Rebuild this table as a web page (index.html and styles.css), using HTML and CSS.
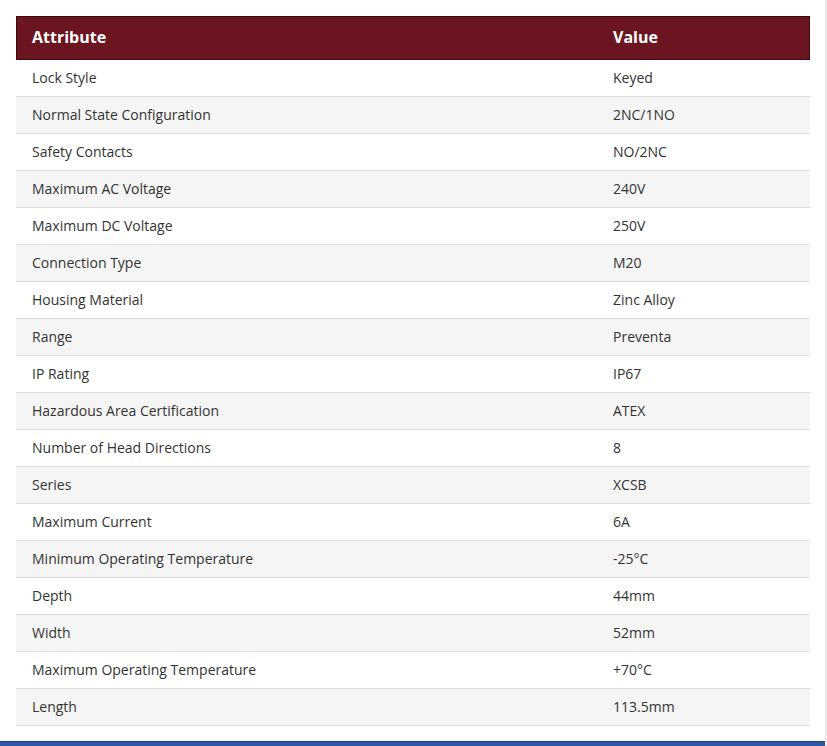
FILE: index.html
```html
<!DOCTYPE html>
<html>
<head>
<meta charset="utf-8">
<link rel="stylesheet" href="styles.css">
</head>
<body>
<div class="page">
  <div class="content">
    <table class="spec">
      <colgroup><col class="c1"><col class="c2"></colgroup>
      <thead>
        <tr><th>Attribute</th><th>Value</th></tr>
      </thead>
      <tbody>
        <tr><td>Lock Style</td><td>Keyed</td></tr>
        <tr><td>Normal State Configuration</td><td>2NC/1NO</td></tr>
        <tr><td>Safety Contacts</td><td>NO/2NC</td></tr>
        <tr><td>Maximum AC Voltage</td><td>240V</td></tr>
        <tr><td>Maximum DC Voltage</td><td>250V</td></tr>
        <tr><td>Connection Type</td><td>M20</td></tr>
        <tr><td>Housing Material</td><td>Zinc Alloy</td></tr>
        <tr><td>Range</td><td>Preventa</td></tr>
        <tr><td>IP Rating</td><td>IP67</td></tr>
        <tr><td>Hazardous Area Certification</td><td>ATEX</td></tr>
        <tr><td>Number of Head Directions</td><td>8</td></tr>
        <tr><td>Series</td><td>XCSB</td></tr>
        <tr><td>Maximum Current</td><td>6A</td></tr>
        <tr><td>Minimum Operating Temperature</td><td>-25°C</td></tr>
        <tr><td>Depth</td><td>44mm</td></tr>
        <tr><td>Width</td><td>52mm</td></tr>
        <tr><td>Maximum Operating Temperature</td><td>+70°C</td></tr>
        <tr><td>Length</td><td>113.5mm</td></tr>
      </tbody>
    </table>
  </div>
  <div class="footer-bar"></div>
</div>
</body>
</html>
```
FILE: styles.css
```css
html, body {
  margin: 0;
  padding: 0;
  background: #ffffff;
}
.page {
  width: 827px;
  height: 746px;
  display: flex;
  flex-direction: column;
  overflow: hidden;
  box-sizing: border-box;
  border-right: 2px solid #ececec;
}
.content {
  flex: 1;
  padding: 16px 15px 0 16px;
}
.spec {
  width: 794px;
  border-collapse: collapse;
  table-layout: fixed;
  font-family: "Open Sans", "Noto Sans", sans-serif;
  font-size: 14px;
  color: #333333;
}
.c1 { width: 581px; }
.c2 { width: 213px; }
.spec thead tr {
  background: #6b1520;
}
.spec th {
  height: 43px;
  padding: 0 16px 2px 16px;
  text-align: left;
  font-size: 16px;
  font-weight: 700;
  color: #ffffff;
  border-top: 1px solid #3d0910;
  border-bottom: 1px solid #3d0910;
  box-sizing: border-box;
}
.spec th:first-child { box-shadow: inset 1px 0 0 #3d0910; }
.spec th:last-child { box-shadow: inset -1px 0 0 #3d0910; }
.spec td {
  height: 37px;
  padding: 0 16px 1px 16px;
  border-bottom: 1px solid #dddddd;
  box-sizing: border-box;
  vertical-align: middle;
}
.spec tbody tr:nth-child(even) {
  background: #f5f5f5;
}
.footer-bar {
  height: 4px;
  background: #2f58a6;
  border-top: 1px solid #1e3f80;
}
```
